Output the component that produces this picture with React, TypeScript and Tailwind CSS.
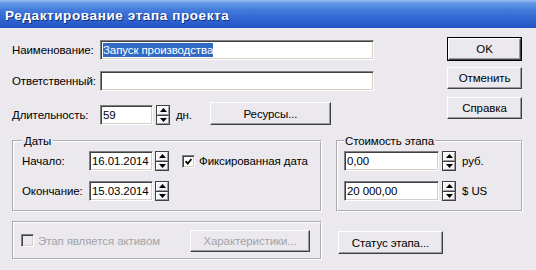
import type { ReactNode } from "react";

// Classic Windows dialog: "Редактирование этапа проекта"

function Edit({
	width,
	children,
}: {
	width: string;
	children?: ReactNode;
}) {
	return (
		<div
			className={`${width} h-[20px] bg-white border border-t-[#808080] border-l-[#808080] border-r-white border-b-white shadow-[inset_1px_1px_0_#404040,inset_-1px_-1px_0_#d4d0c8] flex items-center pl-[2px] whitespace-nowrap overflow-hidden leading-[14px]`}
		>
			{children}
		</div>
	);
}

function Arrow({ up }: { up?: boolean }) {
	return (
		<svg width="7" height="4" viewBox="0 0 7 4" className="block">
			{up ? (
				<polygon points="3.5,0 7,4 0,4" fill="#000" />
			) : (
				<polygon points="0,0 7,0 3.5,4" fill="#000" />
			)}
		</svg>
	);
}

function Spin({ className = "" }: { className?: string }) {
	return (
		<div
			className={`w-[14px] h-[20px] flex flex-col border border-[#404040] bg-[#404040] gap-px ${className}`}
		>
			<div className="flex-1 flex items-center justify-center bg-[#f4f3f6] border-t border-l border-white border-r border-b border-r-[#9c9ca0] border-b-[#9c9ca0]">
				<Arrow up />
			</div>
			<div className="flex-1 flex items-center justify-center bg-[#f4f3f6] border-t border-l border-white border-r border-b border-r-[#9c9ca0] border-b-[#9c9ca0]">
				<Arrow />
			</div>
		</div>
	);
}

function Button({
	width,
	height = "h-[22px]",
	disabled,
	children,
	isDefault,
}: {
	width: string;
	height?: string;
	disabled?: boolean;
	isDefault?: boolean;
	children: ReactNode;
}) {
	const face = (
		<div
			className={`w-full h-full flex items-center justify-center bg-[#ebe9ed] border border-t-white border-l-white border-r-[#404040] border-b-[#404040] shadow-[inset_-1px_-1px_0_#9c9ca0] ${disabled ? "text-[#a3a3a8]" : "text-black"}`}
		>
			{children}
		</div>
	);
	if (isDefault) {
		return (
			<div className={`${width} ${height} border border-black`}>{face}</div>
		);
	}
	return <div className={`${width} ${height}`}>{face}</div>;
}

function Check({ checked, disabled }: { checked?: boolean; disabled?: boolean }) {
	return (
		<div
			className={`w-[13px] h-[13px] border border-t-[#808080] border-l-[#808080] border-r-white border-b-white shadow-[inset_1px_1px_0_#404040,inset_-1px_-1px_0_#d4d0c8] flex items-center justify-center ${disabled ? "bg-[#ebe9ed]" : "bg-white"}`}
		>
			{checked && (
				<svg width="7" height="7" viewBox="0 0 7 7">
					<path d="M0.5 3 L2.7 5.5 L6.5 1" stroke="#000" strokeWidth="1.8" fill="none" />
				</svg>
			)}
		</div>
	);
}

export default function App() {
	return (
		<div className="w-[536px] h-[270px] bg-[#ebe9ed] overflow-hidden text-[11.5px] tracking-[-0.1px] leading-[14px] text-black font-['Liberation_Sans',Arial,sans-serif]">
			{/* Title bar */}
			<div className="h-[28px] flex items-center pl-[5px] pt-[4px] bg-[linear-gradient(to_bottom,#9cc0f3_0%,#6598e6_10%,#3f77da_40%,#2c60cf_78%,#2150bf_100%)]">
				<span className="text-white font-bold text-[13.5px] tracking-[0.6px] [text-shadow:1px_1px_0_#10307a]">
					Редактирование этапа проекта
				</span>
			</div>

			{/* Top section */}
			<div className="flex">
				<div className="flex-1 pl-[12px] pt-[12px] flex flex-col gap-[11px]">
					<div className="flex items-center">
						<span className="w-[88px]">Наименование:</span>
						<Edit width="w-[274px]">
							<span className="bg-[#316ac5] text-white">Запуск производства</span>
						</Edit>
					</div>
					<div className="flex items-center">
						<span className="w-[88px]">Ответственный:</span>
						<Edit width="w-[274px]" />
					</div>
					<div className="flex items-end">
						<div className="flex items-center">
							<span className="w-[88px]">Длительность:</span>
							<Edit width="w-[53px]">59</Edit>
							<Spin className="ml-[3px]" />
							<span className="ml-[6px] w-[34px]">дн.</span>
						</div>
						<Button width="w-[121px]" height="h-[23px]">
							Ресурсы...
						</Button>
					</div>
				</div>
				<div className="w-[89px] pt-[9px] flex flex-col">
					<Button width="w-[75px]" height="h-[24px]" isDefault>
						OK
					</Button>
					<div className="mt-[6px]">
						<Button width="w-[75px]">Отменить</Button>
					</div>
					<div className="mt-[8px]">
						<Button width="w-[75px]">Справка</Button>
					</div>
				</div>
			</div>

			{/* Groups */}
			<div className="flex mt-[9px] pl-[12px]">
				<fieldset className="w-[310px] h-[78px] border-2 border-white [border-style:groove]">
					<legend className="ml-[8px] px-[2px] leading-[14px]">Даты</legend>
					<div className="pl-[8px] pt-[3px] flex flex-col gap-[10px]">
						<div className="flex items-center">
							<span className="w-[67px]">Начало:</span>
							<Edit width="w-[64px]">16.01.2014</Edit>
							<Spin className="ml-[2px]" />
							<div className="ml-[13px]">
								<Check checked />
							</div>
							<span className="ml-[4px]">Фиксированная дата</span>
						</div>
						<div className="flex items-center">
							<span className="w-[67px]">Окончание:</span>
							<Edit width="w-[64px]">15.03.2014</Edit>
							<Spin className="ml-[2px]" />
						</div>
					</div>
				</fieldset>
				<fieldset className="ml-[14px] w-[187px] h-[78px] border-2 border-white [border-style:groove]">
					<legend className="ml-[6px] px-[1px] leading-[14px]">Стоимость этапа</legend>
					<div className="pl-[6px] pt-[3px] flex flex-col gap-[10px]">
						<div className="flex items-center">
							<Edit width="w-[95px]">0,00</Edit>
							<Spin className="ml-[3px]" />
							<span className="ml-[6px]">руб.</span>
						</div>
						<div className="flex items-center">
							<Edit width="w-[95px]">20 000,00</Edit>
							<Spin className="ml-[3px]" />
							<span className="ml-[6px]">$ US</span>
						</div>
					</div>
				</fieldset>
			</div>

			{/* Bottom row */}
			<div className="flex mt-[9px] pl-[12px]">
				<div className="w-[310px] h-[39px] border-2 border-white [border-style:groove] flex items-center pl-[7px]">
					<Check disabled />
					<span className="ml-[4px] w-[152px] text-[#a3a3a8]">Этап является активом</span>
					<Button width="w-[120px]" disabled>
						Характеристики...
					</Button>
				</div>
				<div className="ml-[16px] pt-[10px]">
					<Button width="w-[105px]" height="h-[23px]">
						Статус этапа...
					</Button>
				</div>
			</div>
		</div>
	);
}
